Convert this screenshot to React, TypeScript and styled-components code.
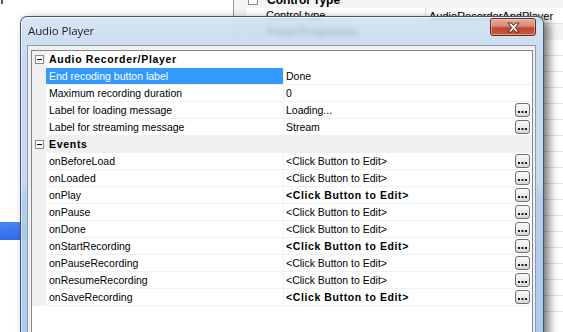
import styled, { createGlobalStyle } from "styled-components";

type Prop = {
  name: string;
  value: string;
  bold?: boolean;
  button?: boolean;
  selected?: boolean;
};

type Category = {
  title: string;
  shaded?: boolean;
  props: Prop[];
};

const EDIT = "<Click Button to Edit>";

const categories: Category[] = [
  {
    title: "Audio Recorder/Player",
    props: [
      { name: "End recoding button label", value: "Done", selected: true },
      { name: "Maximum recording duration", value: "0" },
      { name: "Label for loading message", value: "Loading...", button: true },
      { name: "Label for streaming message", value: "Stream", button: true },
    ],
  },
  {
    title: "Events",
    shaded: true,
    props: [
      { name: "onBeforeLoad", value: EDIT, button: true },
      { name: "onLoaded", value: EDIT, button: true },
      { name: "onPlay", value: EDIT, button: true, bold: true },
      { name: "onPause", value: EDIT, button: true },
      { name: "onDone", value: EDIT, button: true },
      { name: "onStartRecording", value: EDIT, button: true, bold: true },
      { name: "onPauseRecording", value: EDIT, button: true },
      { name: "onResumeRecording", value: EDIT, button: true },
      { name: "onSaveRecording", value: EDIT, button: true, bold: true },
    ],
  },
];

// the property grid of the main window, mostly hidden behind the dialog
type BgItem = { cat?: boolean; name?: string; value?: string; button?: boolean };

const bgItems: BgItem[] = [
  { cat: true, name: "Control Type" },
  { name: "Control type", value: "AudioRecorderAndPlayer" },
  { cat: true, name: "Field Properties" },
  { button: true },
  {},
  {},
  { button: true },
  { button: true },
  { button: true },
  { button: true },
  {},
  {},
  { button: true },
  {},
  {},
  {},
  { button: true },
  {},
  { value: ">" },
  {},
];

const GlobalStyle = createGlobalStyle`
  html, body {
    margin: 0;
    padding: 0;
  }
  body {
    width: 563px;
    height: 332px;
    overflow: hidden;
    background: #ffffff;
    font-family: "Liberation Sans", Arial, sans-serif;
  }
`;

const Dots = () => (
  <svg width="9" height="3" viewBox="0 0 9 3">
    <rect x="0" y="0" width="2" height="2" fill="#1a1a1a" />
    <rect x="3.5" y="0" width="2" height="2" fill="#1a1a1a" />
    <rect x="7" y="0" width="2" height="2" fill="#1a1a1a" />
  </svg>
);

const CloseGlyph = () => (
  <svg width="13" height="11" viewBox="0 0 13 11">
    <path
      d="M1 1 H4.5 L6.5 3.6 L8.5 1 H12 L8.3 5.5 L12 10 H8.5 L6.5 7.4 L4.5 10 H1 L4.7 5.5 Z"
      fill="#ffffff"
      stroke="#5a1c12"
      strokeWidth="1"
      strokeLinejoin="round"
    />
  </svg>
);

const App = () => {
  return (
    <>
      <GlobalStyle />
      <Desktop>
        <BgLeft>
          <BgTopMark />
          <BgSelected />
        </BgLeft>
        <BgGrid>
          {bgItems.map((it, i) =>
            it.cat ? (
              <BgCat key={i}>
                <BgBox />
                <span>{it.name}</span>
              </BgCat>
            ) : (
              <BgRow key={i}>
                <BgGutter />
                <BgName>{it.name}</BgName>
                <BgValue>
                  <span>{it.value}</span>
                  {it.button && <BgButton />}
                </BgValue>
              </BgRow>
            )
          )}
        </BgGrid>

        <Dialog>
          <TitleBar>
            <Title>Audio Player</Title>
            <CloseButton>
              <CloseGlyph />
            </CloseButton>
          </TitleBar>
          <Client>
            <Grid>
              {categories.map((cat) => (
                <div key={cat.title}>
                  <CategoryRow $shaded={cat.shaded}>
                    <Gutter>
                      <Expander />
                    </Gutter>
                    <CategoryTitle>{cat.title}</CategoryTitle>
                  </CategoryRow>
                  {cat.props.map((p) => (
                    <PropRow key={p.name}>
                      <Gutter />
                      <NameCell $selected={p.selected}>{p.name}</NameCell>
                      <ValueCell>
                        <ValueText $bold={p.bold}>{p.value}</ValueText>
                        {p.button && (
                          <EllipsisButton>
                            <Dots />
                          </EllipsisButton>
                        )}
                      </ValueCell>
                    </PropRow>
                  ))}
                </div>
              ))}
              <GridFill />
            </Grid>
          </Client>
        </Dialog>
      </Desktop>
    </>
  );
};

export default App;

const Desktop = styled.div`
  position: relative;
  width: 563px;
  height: 332px;
  overflow: hidden;
  display: flex;
  background: #ffffff;
`;

const BgLeft = styled.div`
  flex: none;
  width: 233px;
  box-sizing: border-box;
  display: flex;
  flex-direction: column;
`;

const BgTopMark = styled.div`
  height: 222px;
  background: linear-gradient(90deg, #555 0, #555 2px, transparent 2px) no-repeat 1px 0 / 3px 4px;
`;

const BgSelected = styled.div`
  height: 18px;
  background: linear-gradient(180deg, #4a86f2 0%, #2f6ae8 100%);
`;

const BgGrid = styled.div`
  flex: none;
  width: 360px;
  margin-top: -8px;
  border-left: 1px solid #9a9a9a;
  display: flex;
  flex-direction: column;
  font-size: 11px;
  color: #000;
`;

const BgCat = styled.div`
  height: 16px;
  display: flex;
  align-items: center;
  gap: 9px;
  padding-left: 14px;
  background: #f4f4f4;
  font-weight: bold;
  font-size: 12px;
`;

const BgBox = styled.div`
  width: 8px;
  height: 8px;
  border: 1px solid #8a8a8a;
  background: #fff;
`;

const BgRow = styled.div`
  height: 16px;
  box-sizing: border-box;
  display: grid;
  grid-template-columns: 12px 180px 1fr;
  border-bottom: 1px solid #e2e2e2;
`;

const BgGutter = styled.div`
  background: #f4f4f4;
`;

const BgName = styled.div`
  padding-left: 20px;
  line-height: 15px;
  border-right: 1px solid #e2e2e2;
`;

const BgValue = styled.div`
  display: flex;
  align-items: center;
  padding-left: 3px;
  gap: 4px;
  span {
    width: 132px;
    white-space: nowrap;
  }
`;

const BgButton = styled.div`
  width: 13px;
  height: 12px;
  border: 1px solid #707070;
  border-radius: 2px;
  background: #eaeaea;
`;

const Dialog = styled.div`
  position: absolute;
  left: 20px;
  top: 16px;
  width: 524px;
  height: 350px;
  box-sizing: border-box;
  display: flex;
  flex-direction: column;
  border: 1px solid rgba(38, 56, 78, 0.8);
  border-radius: 7px 7px 0 0;
  background: linear-gradient(
    180deg,
    rgba(206, 224, 243, 0.82) 0%,
    rgba(194, 214, 236, 0.9) 12%,
    rgba(196, 215, 236, 0.95) 48%,
    rgba(176, 204, 236, 0.95) 52%,
    rgba(168, 198, 236, 0.95) 100%
  );
  backdrop-filter: blur(2.5px);
  box-shadow: 5px 3px 10px rgba(0, 0, 0, 0.55), inset 0 1px 0 rgba(255, 255, 255, 0.7),
    inset 1px 0 0 rgba(255, 255, 255, 0.5);
`;

const TitleBar = styled.div`
  height: 28px;
  flex: none;
  display: flex;
  align-items: flex-start;
  padding-left: 7px;
`;

const Title = styled.div`
  margin-top: 6px;
  font-family: "Open Sans", "Liberation Sans", sans-serif;
  font-size: 11.5px;
  color: #15202c;
  letter-spacing: -0.1px;
`;

const CloseButton = styled.div`
  margin-left: auto;
  margin-right: 7px;
  margin-top: 1px;
  width: 46px;
  height: 18px;
  box-sizing: border-box;
  display: flex;
  align-items: center;
  justify-content: center;
  border: 1px solid #6a2a20;
  border-radius: 3px;
  background: linear-gradient(
    180deg,
    #e6ada0 0%,
    #d68979 45%,
    #bf4630 55%,
    #c85a3e 100%
  );
  box-shadow: inset 0 0 0 1px rgba(255, 220, 210, 0.45);
`;

const Client = styled.div`
  flex: 1;
  display: flex;
  margin: 0 7px 0 6px;
  padding: 4px 2px 0 3px;
  background: #f0f0f0;
  border: 1px solid #8a9bb0;
  border-bottom: none;
`;

const Grid = styled.div`
  flex: 1;
  display: flex;
  flex-direction: column;
  border: 1px solid #828790;
  background: #ffffff;
  font-size: 10.5px;
  color: #000000;
`;

const CategoryRow = styled.div<{ $shaded?: boolean }>`
  height: 17px;
  display: flex;
  background: ${(p) => (p.$shaded ? "#f0f0f0" : "#ffffff")};
`;

const Gutter = styled.div`
  flex: none;
  width: 14px;
  background: #f0f0f0;
  display: flex;
  align-items: center;
  padding-left: 3px;
  box-sizing: border-box;
`;

const Expander = styled.div`
  position: relative;
  width: 9px;
  height: 9px;
  box-sizing: border-box;
  border: 1px solid #8c8c8c;
  background: #ffffff;
  &::after {
    content: "";
    position: absolute;
    left: 1px;
    top: 3px;
    width: 5px;
    height: 1px;
    background: #000000;
  }
`;

const CategoryTitle = styled.div`
  padding-left: 3px;
  line-height: 17px;
  font-weight: bold;
  letter-spacing: 0.7px;
`;

const PropRow = styled.div`
  height: 17px;
  display: flex;
`;

const NameCell = styled.div<{ $selected?: boolean }>`
  flex: none;
  width: 238px;
  box-sizing: border-box;
  padding-left: 3px;
  line-height: 16px;
  border-right: 1px solid #f0f0f0;
  border-bottom: 1px solid #f0f0f0;
  white-space: nowrap;
  background: ${(p) => (p.$selected ? "#3399ff" : "#ffffff")};
  color: ${(p) => (p.$selected ? "#ffffff" : "#000000")};
`;

const ValueCell = styled.div`
  flex: 1;
  display: flex;
  align-items: center;
  padding: 0 2px 0 2px;
  border-bottom: 1px solid #f0f0f0;
`;

const ValueText = styled.span<{ $bold?: boolean }>`
  flex: 1;
  white-space: nowrap;
  font-weight: ${(p) => (p.$bold ? "bold" : "normal")};
  letter-spacing: ${(p) => (p.$bold ? "0.6px" : "0")};
`;

const EllipsisButton = styled.div`
  width: 15px;
  height: 14px;
  box-sizing: border-box;
  display: flex;
  align-items: flex-end;
  justify-content: center;
  padding-bottom: 2px;
  border: 1px solid #6e6e6e;
  border-radius: 3px;
  background: linear-gradient(180deg, #fbfbfb 0%, #ececec 50%, #d6d6d6 100%);
`;

const GridFill = styled.div`
  flex: 1;
  background: #ffffff;
`;
